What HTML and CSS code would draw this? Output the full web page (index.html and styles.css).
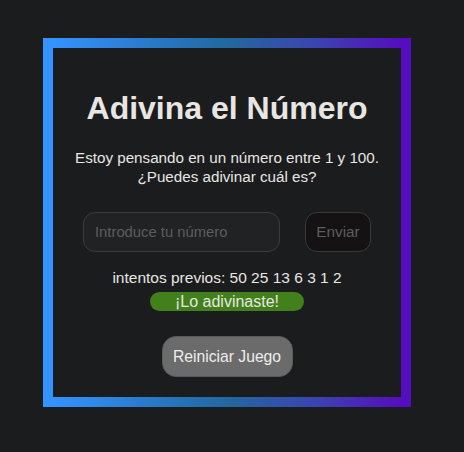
FILE: index.html
```html
<!DOCTYPE html>
<html lang="es">
<head>
<meta charset="utf-8">
<title>Adivina el Número</title>
<link rel="stylesheet" href="styles.css">
</head>
<body>
<div class="game">
  <h1 class="title">Adivina el Número</h1>
  <p class="intro">Estoy pensando en un número entre 1 y 100.<br>¿Puedes adivinar cuál es?</p>
  <div class="form-row">
    <input class="guess-field" type="text" placeholder="Introduce tu número">
    <button class="guess-submit" type="button">Enviar</button>
  </div>
  <p class="guesses">intentos previos: 50 25 13 6 3 1 2</p>
  <p class="last-result">¡Lo adivinaste!</p>
  <button class="reset" type="button">Reiniciar Juego</button>
</div>
</body>
</html>
```
FILE: styles.css
```css
html, body {
  margin: 0;
  background: #1b1c1e;
}
body {
  padding: 38px 0 0 43px;
  font-family: "Liberation Sans", Arial, sans-serif;
  color: #e8e6e3;
  height: 452px;
  box-sizing: border-box;
}
.game {
  box-sizing: border-box;
  width: 368px;
  border: 10px solid;
  border-image: linear-gradient(to right, #3593ff 0%, #2a7ccf 25%, #22689f 50%, #3a45b0 75%, #560cbf 100%) 1;
  padding: 20px 10px 20px;
  display: flex;
  flex-direction: column;
  align-items: center;
  text-align: center;
}
.title {
  font-size: 32px;
  font-weight: bold;
  margin: 21.5px 0 21.5px;
  line-height: 37px;
}
.intro {
  font-size: 15.2px;
  margin: 0;
  line-height: 19px;
  white-space: nowrap;
}
.form-row {
  display: flex;
  gap: 25px;
  margin-top: 26px;
}
.guess-field {
  box-sizing: border-box;
  width: 197px;
  height: 40px;
  padding: 0 11px;
  border: 1px solid #3a3d40;
  border-radius: 12px;
  background: #202224;
  color: #e8e6e3;
  font-family: "Liberation Sans", Arial, sans-serif;
  font-size: 14.8px;
  outline: none;
}
.guess-field::placeholder {
  color: #5d5d5d;
}
.guess-submit {
  box-sizing: border-box;
  width: 66px;
  height: 40px;
  padding: 0;
  border: 1px solid #3a3838;
  border-radius: 12px;
  background: #151213;
  color: #5d5d5d;
  font-family: "Liberation Sans", Arial, sans-serif;
  font-size: 15.3px;
}
.guesses {
  margin: 16px 0 0;
  font-size: 15.5px;
  line-height: 19px;
}
.last-result {
  margin: 5px 0 0;
  width: 154px;
  height: 19px;
  line-height: 19px;
  border-radius: 10px;
  background: #41801a;
  font-size: 16px;
}
.reset {
  box-sizing: border-box;
  margin-top: 25px;
  width: 131px;
  height: 41px;
  padding: 0;
  border: 1px solid #5a5a5a;
  border-radius: 14px;
  background: #6b6b6b;
  color: #eeeeee;
  font-family: "Liberation Sans", Arial, sans-serif;
  font-size: 15.7px;
}
```
